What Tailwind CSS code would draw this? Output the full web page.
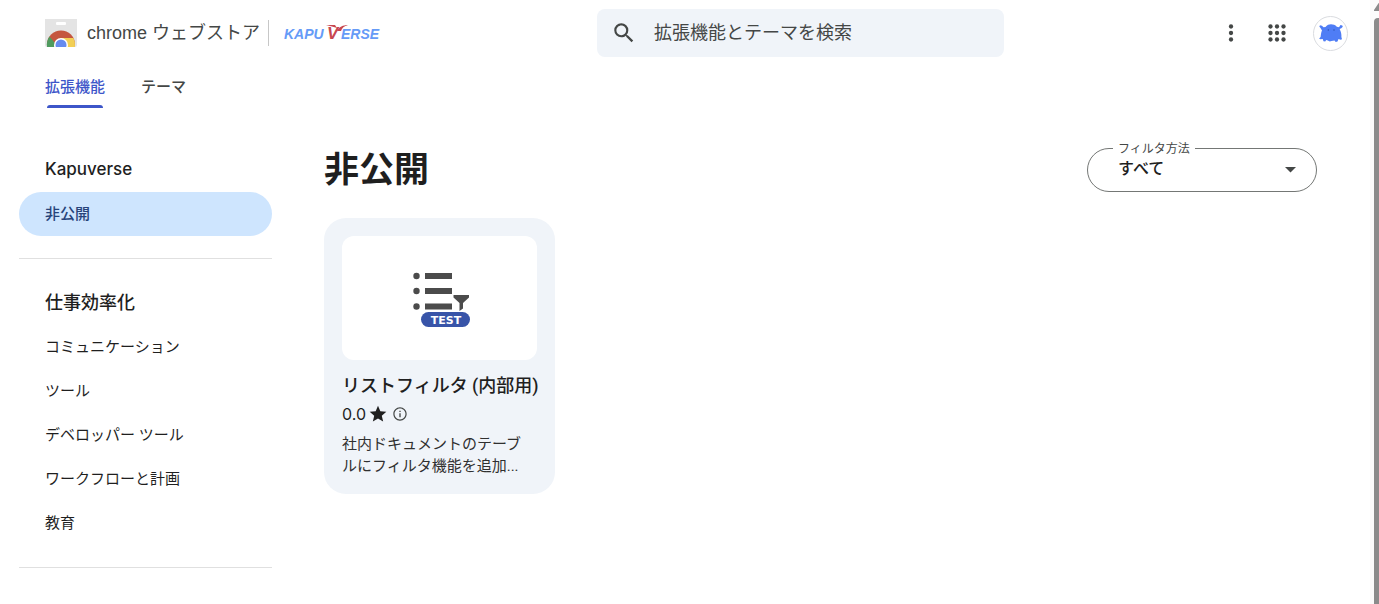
<!DOCTYPE html>
<html lang="ja">
<head>
  <meta charset="UTF-8" />
  <meta name="viewport" content="width=device-width, initial-scale=1.0"/>
  <title>chrome ウェブストア - 非公開</title>
  <script src="https://cdn.jsdelivr.net/npm/@tailwindcss/browser@4"></script>
</head>
<body class="bg-white text-[#1f1f1f] font-['Roboto','Noto_Sans_CJK_JP',sans-serif] h-screen overflow-hidden flex">

  <div class="flex-1 min-w-0 flex flex-col">

    <!-- Header -->
    <header class="grid grid-cols-[1fr_407px_366px] items-center h-[66px] shrink-0">
      <div class="flex items-center pl-[45px]">
        <a href="#" class="flex items-center gap-[10px]">
          <svg class="w-8 h-8 shrink-0" viewBox="0 -2 32 32">
            <defs>
              <clipPath id="tile"><path d="M0 0h32v26a2 2 0 0 1-2 2H2a2 2 0 0 1-2-2z"/></clipPath>
            </defs>
            <g clip-path="url(#tile)">
              <rect width="32" height="32" fill="#e4e4e4"/>
              <rect x="11" y="3" width="10" height="3" rx="1" fill="#fff"/>
              <circle cx="16" cy="25.500" r="14" fill="#c5563f"/>
              <path d="M4.500 17.500A14 14 0 0 0 2 28h9l-1-4z" fill="#4f9b5f"/>
              <path d="M16 19h12.400A14 14 0 0 1 30 28H20z" fill="#f2cf55"/>
              <circle cx="16" cy="26" r="7" fill="#fff"/>
              <circle cx="16" cy="26" r="5.500" fill="#668bf0"/>
            </g>
          </svg>
          <span class="text-lg leading-6 text-[#444746] font-['Liberation_Sans','Noto_Sans_CJK_JP',sans-serif] whitespace-nowrap">chrome ウェブストア</span>
        </a>
        <div class="w-px h-[26px] bg-[#c7c7c7] ml-2 mr-[15px]"></div>
        <a href="#" aria-label="Kapuverse">
          <svg class="w-[102px] h-6" viewBox="0 0 102 24" font-family="Liberation Sans, sans-serif" font-style="italic" font-weight="700">
            <text x="0" y="18" font-size="14" fill="#659bf7">KAPU</text>
            <path d="M42 4h9l2 3c-3-1-7-2-11-3zM53 10c2-4 6-6 11-6-4 1-6 3-7 6z" fill="#c8474f"/>
            <text x="43" y="18" font-size="17" fill="#c8474f">V</text>
            <text x="57" y="18" font-size="14" fill="#659bf7">ERSE</text>
          </svg>
        </a>
      </div>

      <!-- Search -->
      <label class="flex items-center h-12 bg-[#f0f4f9] rounded-lg pl-[14px]">
        <svg class="w-[26px] h-[26px] shrink-0" viewBox="0 0 24 24" fill="#444746"><path d="M15.500 14h-.79l-.28-.27A6.470 6.470 0 0 0 16 9.500 6.500 6.500 0 1 0 9.500 16c1.610 0 3.090-.59 4.230-1.570l.27.28v.79l5 4.990L20.490 19l-4.990-5zm-6 0C7.010 14 5 11.990 5 9.500S7.010 5 9.500 5 14 7.010 14 9.500 11.990 14 9.500 14z"/></svg>
        <input type="search" aria-label="検索" placeholder="拡張機能とテーマを検索" class="flex-1 min-w-0 ml-[17px] text-lg leading-6 bg-transparent outline-none placeholder:text-[#444746]"/>
      </label>

      <div class="flex items-center justify-end pr-[22px]">
        <button aria-label="その他" class="mr-5"><svg class="w-[26px] h-[26px] block" viewBox="0 0 24 24" fill="#444746"><circle cx="12" cy="6" r="2"/><circle cx="12" cy="12" r="2"/><circle cx="12" cy="18" r="2"/></svg></button>
        <button aria-label="Google アプリ" class="mr-[23px]"><svg class="w-[26px] h-[26px] block" viewBox="0 0 24 24" fill="#444746"><circle cx="6" cy="6" r="2"/><circle cx="12" cy="6" r="2"/><circle cx="18" cy="6" r="2"/><circle cx="6" cy="12" r="2"/><circle cx="12" cy="12" r="2"/><circle cx="18" cy="12" r="2"/><circle cx="6" cy="18" r="2"/><circle cx="12" cy="18" r="2"/><circle cx="18" cy="18" r="2"/></svg></button>
        <button aria-label="アカウント" class="w-[35px] h-[35px] rounded-full border border-[#dadce0] flex items-center justify-center">
          <svg class="w-6 h-5" viewBox="0 0 24 20">
            <path d="M3 7.500 1.500 5 .3 3.600 1 2.200l2 .5L4.500 4.300 6.500 4C8 2 10 1.300 12 1.300s4.300.7 5.800 2.500L20 4.300 21.500 2l1.800.5.5 1.300-1.500 1.500-1.700.7.9 2c.8 2 1 4 .9 6l.6 2.200-1.500.6-2-.8-1 2.600-1.800.4-1.200-1.600-3 .6-1.700.4-2-1-1.600-.3-1 1.500-1.700-.3-.8-2.200-2.400.2-1.200-.8 1.500-1.600C2 11 2.200 9 3 7.500z" fill="#4f7df5"/>
            <circle cx="9.300" cy="7" r=".7" fill="#2c4fae"/><circle cx="15" cy="7" r=".7" fill="#2c4fae"/>
          </svg>
        </button>
      </div>
    </header>

    <!-- Tabs -->
    <nav class="flex gap-9 pl-[45px] h-[42px] shrink-0 text-[15px] font-medium text-[#444746]">
      <a href="#" class="flex flex-col text-[#3d56c9]">
        <span class="leading-[42px] h-[39px]">拡張機能</span>
        <span class="h-[3px] mx-[2px] rounded-t-sm bg-[#3d56c9]"></span>
      </a>
      <a href="#" class="leading-[42px]">テーマ</a>
    </nav>

    <div class="flex flex-1 min-h-0 pt-10">

      <!-- Sidebar -->
      <aside class="w-[253px] ml-[19px] shrink-0 text-[15px]">
        <h2 class="h-11 flex items-center px-[26px] text-[17px] font-medium font-['Inter',sans-serif]">Kapuverse</h2>
        <a href="#" class="h-11 flex items-center px-[26px] rounded-full bg-[#cee5fe] text-[#27437a] font-medium">非公開</a>
        <hr class="mt-[22px] mb-[22px] border-[#e0e0e0]"/>
        <h2 class="h-11 flex items-center px-[26px] text-lg font-medium">仕事効率化</h2>
        <a href="#" class="h-11 flex items-center px-[26px]">コミュニケーション</a>
        <a href="#" class="h-11 flex items-center px-[26px]">ツール</a>
        <a href="#" class="h-11 flex items-center px-[26px]">デベロッパー ツール</a>
        <a href="#" class="h-11 flex items-center px-[26px]">ワークフローと計画</a>
        <a href="#" class="h-11 flex items-center px-[26px]">教育</a>
        <hr class="mt-[22px] mb-6 border-[#e0e0e0]"/>
        <h2 class="h-11 flex items-center px-[26px] text-lg font-medium">ライフスタイル</h2>
      </aside>

      <!-- Content -->
      <main class="flex-1 ml-[52px] mr-[53px]">
        <div class="flex items-center justify-between h-11">
          <h1 class="pt-[2px] text-[35px] leading-[44px] font-bold">非公開</h1>
          <div class="relative w-[230px]">
            <label for="filter" class="absolute left-[26px] -top-[7px] px-[5px] bg-white text-xs leading-4 text-[#444746]">フィルタ方法</label>
            <select id="filter" class="appearance-none w-full h-11 pl-[30px] pb-[2px] rounded-full border border-[#747775] bg-transparent text-base font-medium">
              <option>すべて</option>
            </select>
            <svg class="absolute right-[21px] top-[19px] w-[11px] h-[6px] pointer-events-none" viewBox="0 0 11 6"><path d="M0 0h11L5.500 5.500z" fill="#444746"/></svg>
          </div>
        </div>

        <!-- Extension Card -->
        <article class="mt-[26px] w-[231px] h-[276px] p-[18px] rounded-[22px] bg-[#f0f4f9]">
          <div class="h-[124px] rounded-xl bg-white flex items-center justify-center">
            <svg class="w-[60px] h-[60px]" viewBox="0 0 60 60">
              <g fill="#4b4b4b">
                <circle cx="6.500" cy="8" r="3.200"/><circle cx="6.500" cy="23" r="3.200"/><circle cx="6.500" cy="38.500" r="3.200"/>
                <path d="M15 5h27v6H15zM15 20h27v6H15zM15 35.500h27v6H15z"/>
                <path d="M43.500 27H59v2.500L53 35v5.500L49.500 43v-8l-6-5.500z"/>
              </g>
              <rect x="11" y="44" width="49" height="15" rx="7.500" fill="#3854a8"/>
              <text x="36" y="55.500" text-anchor="middle" font-family="DejaVu Sans, sans-serif" font-weight="700" font-size="11" fill="#fff">TEST</text>
            </svg>
          </div>
          <h2 class="mt-[14px] text-lg leading-6 font-medium whitespace-nowrap">リストフィルタ (内部用)</h2>
          <div class="mt-1 flex items-center h-6 text-base font-['Inter',sans-serif]">
            <span>0.0</span>
            <svg class="w-5 h-5 ml-[2px]" viewBox="0 0 24 24" fill="#1f1f1f"><path d="M12 17.270 18.180 21l-1.640-7.030L22 9.240l-7.190-.61L12 2 9.190 8.630 2 9.240l5.460 4.730L5.820 21z"/></svg>
            <svg class="w-4 h-4 ml-1" viewBox="0 0 24 24" fill="#444746"><path d="M11 7h2v2h-2zm0 4h2v6h-2zm1-9C6.480 2 2 6.480 2 12s4.480 10 10 10 10-4.480 10-10S17.520 2 12 2zm0 18.200c-4.500 0-8.200-3.700-8.200-8.200S7.500 3.800 12 3.800s8.200 3.700 8.200 8.200-3.700 8.200-8.200 8.200z"/></svg>
          </div>
          <p class="mt-[7px] text-[15px] leading-[22px] text-[#303030] whitespace-nowrap">社内ドキュメントのテーブ<br/>ルにフィルタ機能を追加...</p>
        </article>
      </main>
    </div>
  </div>

  <!-- Scrollbar -->
  <div class="w-[9px] shrink-0 bg-[#fbfbfb] flex flex-col items-end overflow-hidden">
    <svg class="w-[5px] h-[18px] shrink-0" viewBox="0 0 5 18"><path d="M0 10 4 4q.5-1 1-1v8H0z" fill="#8b8b8b"/></svg>
    <div class="w-[5px] flex-1 rounded-tl bg-[#8b8b8b]"></div>
  </div>

</body>
</html>
